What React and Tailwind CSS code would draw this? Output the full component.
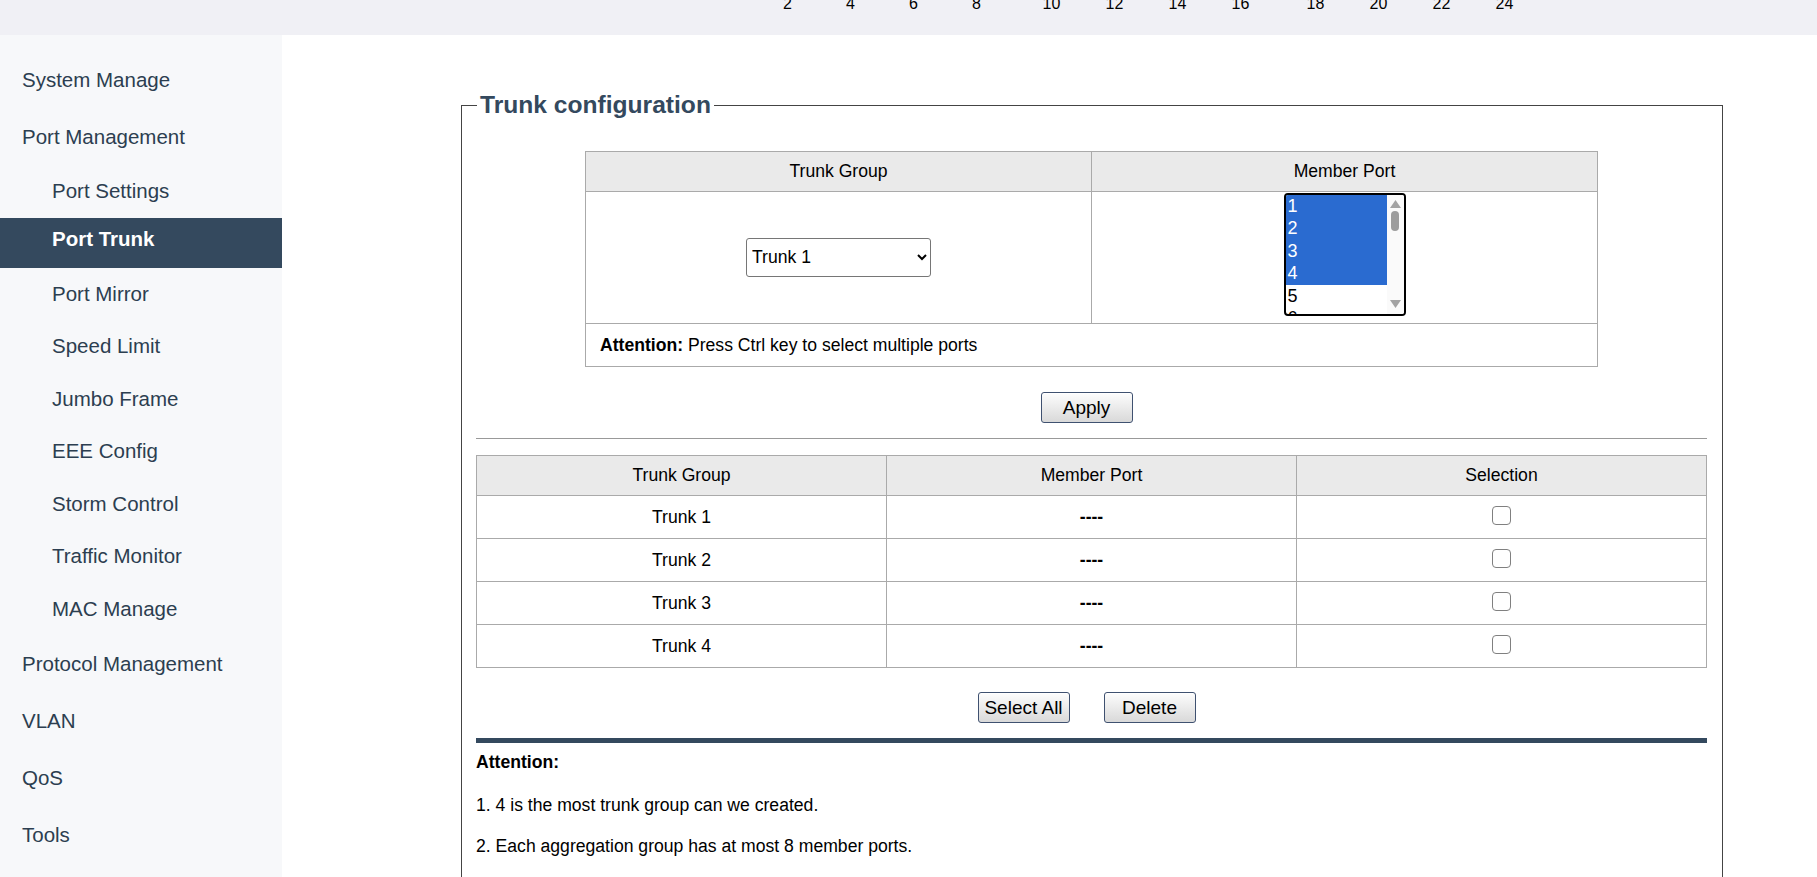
import { useState } from 'react'

const PORT_GROUPS = [
  [2, 4, 6, 8],
  [10, 12, 14, 16],
  [18, 20, 22, 24],
]

const MENU = [
  { label: 'System Manage', level: 0 },
  { label: 'Port Management', level: 0 },
  { label: 'Port Settings', level: 1 },
  { label: 'Port Trunk', level: 1, active: true },
  { label: 'Port Mirror', level: 1 },
  { label: 'Speed Limit', level: 1 },
  { label: 'Jumbo Frame', level: 1 },
  { label: 'EEE Config', level: 1 },
  { label: 'Storm Control', level: 1 },
  { label: 'Traffic Monitor', level: 1 },
  { label: 'MAC Manage', level: 1 },
  { label: 'Protocol Management', level: 0 },
  { label: 'VLAN', level: 0 },
  { label: 'QoS', level: 0 },
  { label: 'Tools', level: 0 },
]

const TRUNKS = ['Trunk 1', 'Trunk 2', 'Trunk 3', 'Trunk 4']

function SideItem({ item }) {
  if (item.active) {
    return (
      <div className="h-[50px] pb-[8px] pl-[52px] flex items-center bg-[#34495e] text-white font-bold">
        {item.label}
      </div>
    )
  }
  if (item.level === 1) {
    return <div className="h-[52.5px] pl-[52px] flex items-center">{item.label}</div>
  }
  return <div className="h-[57px] pl-[22px] flex items-center">{item.label}</div>
}

function Button({ children }) {
  return (
    <button className="w-[92px] h-[31px] border border-[#3f5170] rounded-[3px] bg-linear-to-b from-[#fdfdfd] to-[#d9d9d9] text-[19px] leading-none text-black shadow-[inset_0_1px_0_#ffffff]">
      {children}
    </button>
  )
}

function PortList() {
  const ports = [1, 2, 3, 4, 5, 6]
  const selected = [1, 2, 3, 4]
  return (
    <div className="w-[122px] h-[123px] border-2 border-black rounded-[4px] overflow-hidden flex mx-auto bg-white">
      <div className="flex-1 overflow-hidden">
        {ports.map(p => (
          <div
            key={p}
            className={`h-[22.5px] leading-[22.5px] pl-[2px] text-[18px] text-left ${
              selected.includes(p) ? 'bg-[#2a6bd0] text-white' : 'text-black'
            }`}
          >
            {p}
          </div>
        ))}
      </div>
      <div className="w-[17px] bg-[#fafafa] flex flex-col items-center pt-[5px] pb-[6px]">
        <svg width="11" height="8" viewBox="0 0 11 8">
          <path d="M5.5 0 L11 8 L0 8 Z" fill="#a3a3a3" />
        </svg>
        <div className="w-[8px] h-[20px] mt-[3px] rounded-full bg-[#9d9d9d]" />
        <div className="flex-1" />
        <svg width="11" height="8" viewBox="0 0 11 8">
          <path d="M0 0 L11 0 L5.5 8 Z" fill="#a3a3a3" />
        </svg>
      </div>
    </div>
  )
}

function Checkbox() {
  return <div className="w-[19px] h-[19px] mx-auto -mt-[3px] border border-[#808080] rounded-[4px] bg-white" />
}

export default function App() {
  const [group, setGroup] = useState('1')

  return (
    <div className="min-h-screen flex flex-col font-['Liberation_Sans',Arial,sans-serif] text-black">
      {/* top strip, port labels of the panel picture scrolled off */}
      <header className="h-[35px] shrink-0 bg-[#f0f0f5] overflow-hidden">
        <div className="flex pl-[756px] gap-[12px] -mt-[5px] text-[16px] leading-[17px] text-black">
          {PORT_GROUPS.map((g, i) => (
            <div key={i} className="flex">
              {g.map(n => (
                <span key={n} className="w-[63px] text-center">{n}</span>
              ))}
            </div>
          ))}
        </div>
      </header>

      <div className="flex flex-1">
        <aside className="w-[282px] shrink-0 bg-[#f7f8fa] pt-[16.5px] text-[20.5px] text-[#2c3e50]">
          {MENU.map(item => (
            <SideItem key={item.label} item={item} />
          ))}
        </aside>

        <main className="flex-1 bg-white pt-[52px] pl-[179px]">
          <fieldset className="w-[1262px] border border-[#444] pl-[14px] pr-[15px] pb-[60px]">
            <legend className="ml-[1px] px-[3px] text-[24.6px] font-bold text-[#34495e]">
              Trunk configuration
            </legend>

            {/* trunk group editor */}
            <table className="w-[1013px] mx-auto mt-[27px] table-fixed border-collapse text-[17.6px]">
              <thead>
                <tr className="h-[40px] bg-[#eaeaea]">
                  <th className="border border-[#aaa] font-normal">Trunk Group</th>
                  <th className="border border-[#aaa] font-normal">Member Port</th>
                </tr>
              </thead>
              <tbody>
                <tr className="h-[132px]">
                  <td className="border border-[#aaa] text-center">
                    <select
                      value={group}
                      onChange={e => setGroup(e.target.value)}
                      className="w-[185px] h-[39px] border border-[#767676] rounded-[3px] pl-[1px] bg-white text-[17.6px]"
                    >
                      <option value="1">Trunk 1</option>
                      <option value="2">Trunk 2</option>
                      <option value="3">Trunk 3</option>
                      <option value="4">Trunk 4</option>
                    </select>
                  </td>
                  <td className="border border-[#aaa] align-top pt-[1px]">
                    <PortList />
                  </td>
                </tr>
                <tr className="h-[43px]">
                  <td colSpan={2} className="border border-[#aaa] pl-[14px]">
                    <b>Attention:</b> Press Ctrl key to select multiple ports
                  </td>
                </tr>
              </tbody>
            </table>

            <div className="flex justify-center pr-[10px] mt-[25px]">
              <Button>Apply</Button>
            </div>

            <div className="h-px bg-[#999] mt-[15px]" />

            {/* existing trunk groups */}
            <table className="w-full mt-[16px] table-fixed border-collapse text-[17.6px] text-center">
              <thead>
                <tr className="h-[40px] bg-[#eaeaea]">
                  <th className="border border-[#aaa] font-normal">Trunk Group</th>
                  <th className="border border-[#aaa] font-normal">Member Port</th>
                  <th className="border border-[#aaa] font-normal">Selection</th>
                </tr>
              </thead>
              <tbody>
                {TRUNKS.map(t => (
                  <tr key={t} className="h-[43px]">
                    <td className="border border-[#aaa]">{t}</td>
                    <td className="border border-[#aaa] font-bold">----</td>
                    <td className="border border-[#aaa]">
                      <Checkbox />
                    </td>
                  </tr>
                ))}
              </tbody>
            </table>

            <div className="flex justify-center gap-[34px] pr-[10px] mt-[24px]">
              <Button>Select All</Button>
              <Button>Delete</Button>
            </div>

            <div className="h-[5px] bg-[#34495e] mt-[15px]" />

            <div className="text-[17.6px] leading-[20px]">
              <p className="mt-[9px] font-bold">Attention:</p>
              <p className="mt-[23px]">1. 4 is the most trunk group can we created.</p>
              <p className="mt-[21px]">2. Each aggregation group has at most 8 member ports.</p>
            </div>
          </fieldset>
        </main>
      </div>
    </div>
  )
}
